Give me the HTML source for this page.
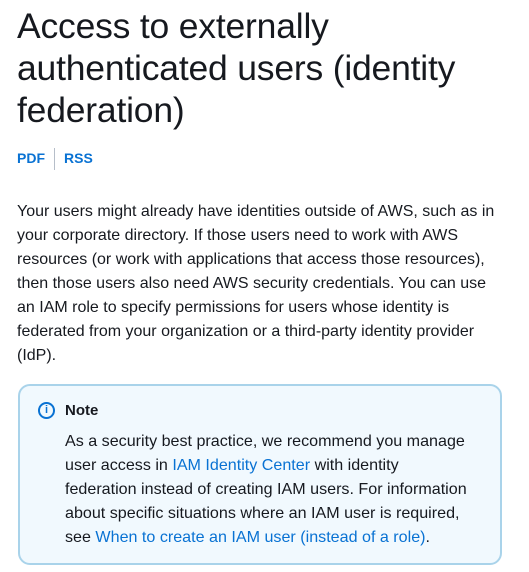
<!DOCTYPE html>
<html><head><style>
body{margin:0;width:529px;height:572px;background:#fff;font-family:"Liberation Sans",sans-serif;color:#16191f;overflow:hidden}
h1{position:absolute;left:17px;top:5px;margin:0;font-weight:400;font-size:35.5px;line-height:42px;white-space:nowrap;letter-spacing:-0.2px}
.links{position:absolute;left:17px;top:148px;font-size:14px;font-weight:700;color:#0972d3}
.links span{display:inline-block}
.sep{display:inline-block;width:1px;height:22px;background:#b6bec9;vertical-align:middle;margin:0 9px 0 9px}
p{position:absolute;left:17px;top:200px;margin:0;font-size:16px;line-height:24px;white-space:nowrap}
.note{position:absolute;left:18px;top:384px;width:484px;height:181px;box-sizing:border-box;border:2px solid #a9d3ea;border-radius:12px;background:#f1f9fe}
.nh{position:absolute;left:65px;top:402px;font-size:15px;font-weight:700}
.ic{position:absolute;left:38px;top:402px;width:13px;height:13px;border:2px solid #0972d3;border-radius:50%;color:#0972d3;font-size:11px;font-weight:700;text-align:center;line-height:13px}
.nt{position:absolute;left:65px;top:429px;font-size:16.1px;line-height:24px;white-space:nowrap}
a{color:#0972d3;text-decoration:none}
</style></head><body>
<h1>Access to externally<br>authenticated users (identity<br>federation)</h1>
<div class="links"><span>PDF</span><span class="sep"></span><span>RSS</span></div>
<p>Your users might already have identities outside of AWS, such as in<br>your corporate directory. If those users need to work with AWS<br>resources (or work with applications that access those resources),<br>then those users also need AWS security credentials. You can use<br>an IAM role to specify permissions for users whose identity is<br>federated from your organization or a third-party identity provider<br>(IdP).</p>
<div class="note"></div>
<div class="ic">i</div>
<div class="nh">Note</div>
<div class="nt">As a security best practice, we recommend you manage<br>user access in <a>IAM Identity Center</a> with identity<br>federation instead of creating IAM users. For information<br>about specific situations where an IAM user is required,<br>see <a>When to create an IAM user (instead of a role)</a>.</div>
</body></html>
